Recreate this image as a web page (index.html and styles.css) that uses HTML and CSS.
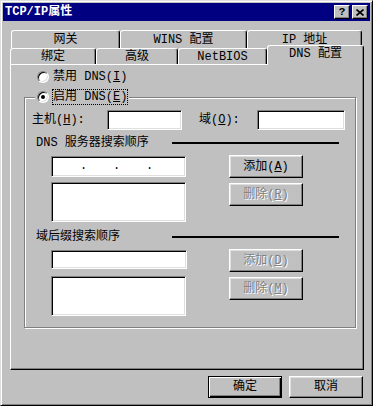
FILE: index.html
```html
<!DOCTYPE html>
<html lang="zh-CN">
<head>
    <meta charset="UTF-8">
    <title>TCP/IP属性</title>
    <link rel="stylesheet" href="styles.css">
</head>
<body>
    <div class="window">
        <div class="titlebar">
            <span class="title">TCP/IP属性</span>
            <span class="title-btn help">?</span>
            <span class="title-btn">
                <svg width="8" height="7" viewBox="0 0 8 7"><path d="M0.5 0.5L7.5 6.5M7.5 0.5L0.5 6.5" stroke="#000" stroke-width="1.6" fill="none"/></svg>
            </span>
        </div>

        <div class="tabs">
            <div class="tab-row back">
                <div class="tab" style="width:109px">网关</div>
                <div class="tab" style="width:127px">WINS 配置</div>
                <div class="tab" style="width:115px">IP 地址</div>
            </div>
            <div class="tab-row front">
                <div class="tab" style="width:86px">绑定</div>
                <div class="tab" style="width:82px">高级</div>
                <div class="tab" style="width:89px">NetBIOS</div>
                <div class="tab selected" style="width:97px">DNS 配置</div>
            </div>
        </div>

        <div class="panel">
            <div class="radio-row">
                <span class="radio"></span>
                <span>禁用 DNS(<u>I</u>)</span>
            </div>

            <div class="group">
                <div class="radio-row group-title">
                    <span class="radio checked"></span>
                    <span class="focus">启用 DNS(<u>E</u>)</span>
                </div>

                <div class="host-row">
                    <span class="host-label">主机(<u>H</u>):</span>
                    <div class="field host-input"></div>
                    <span class="domain-label">域(<u>O</u>):</span>
                    <div class="field domain-input"></div>
                </div>

                <div class="section">
                    <span class="section-label">DNS 服务器搜索顺序</span>
                    <span class="section-line"></span>
                </div>
                <div class="lists">
                    <div class="col-fields">
                        <div class="field ip-input">
                            <span class="ip-dot">.</span>
                            <span class="ip-dot">.</span>
                            <span class="ip-dot">.</span>
                        </div>
                        <div class="field list-box"></div>
                    </div>
                    <div class="col-buttons">
                        <div class="btn">添加(<u>A</u>)</div>
                        <div class="btn disabled">删除(<u>R</u>)</div>
                    </div>
                </div>

                <div class="section second">
                    <span class="section-label">域后缀搜索顺序</span>
                    <span class="section-line"></span>
                </div>
                <div class="lists">
                    <div class="col-fields wide">
                        <div class="field suffix-input"></div>
                        <div class="field list-box"></div>
                    </div>
                    <div class="col-buttons">
                        <div class="btn disabled">添加(<u>D</u>)</div>
                        <div class="btn disabled">删除(<u>M</u>)</div>
                    </div>
                </div>
            </div>
        </div>

        <div class="actions">
            <div class="btn action default">确定</div>
            <div class="btn action">取消</div>
        </div>
    </div>
</body>
</html>
```

FILE: styles.css
```css
body {
    margin: 0;
    background: #c0c0c0;
    font-family: "Liberation Mono", "Noto Sans CJK SC", monospace;
    font-size: 12px;
    line-height: 14px;
    color: #000;
}
u {
    text-decoration-thickness: 1px;
    text-underline-offset: 1px;
}
.window {
    width: 373px;
    height: 406px;
    box-sizing: border-box;
    border: 1px solid;
    border-color: #dfdfdf #000 #000 #dfdfdf;
    box-shadow: inset 1px 1px #fff, inset -1px -1px #808080;
    padding: 2px;
    background: #c0c0c0;
}
.titlebar {
    height: 18px;
    background: #000080;
    color: #fff;
    display: flex;
    align-items: center;
    padding: 0 2px;
}
.title {
    flex: 1;
    font-weight: bold;
}
.title-btn {
    width: 16px;
    height: 14px;
    box-sizing: border-box;
    margin-left: 2px;
    background: #c0c0c0;
    color: #000;
    border: 1px solid;
    border-color: #fff #000 #000 #fff;
    box-shadow: inset -1px -1px #808080;
    display: flex;
    align-items: center;
    justify-content: center;
    font-weight: bold;
    font-size: 11px;
    line-height: 11px;
}

/* tabs */
.tabs {
    margin: 9px 0 0 7px;
}
.tab-row {
    display: flex;
}
.back {
    height: 18px;
    margin-left: 1px;
}
.front {
    height: 16px;
    align-items: flex-end;
}
.tab {
    box-sizing: border-box;
    height: 100%;
    background: #c0c0c0;
    border: 1px solid;
    border-color: #fff #000 transparent #fff;
    border-bottom: none;
    border-radius: 3px 3px 0 0;
    box-shadow: inset -1px 0 #808080;
    text-align: center;
    padding-top: 2px;
}
.front .tab {
    padding-top: 1px;
}
.front .tab.selected {
    height: 20px;
    margin-bottom: -1px;
    position: relative;
    z-index: 1;
}

/* panel */
.panel {
    margin-left: 7px;
    width: 354px;
    height: 306px;
    box-sizing: border-box;
    border: 1px solid;
    border-color: #fff #000 #000 #fff;
    box-shadow: inset -1px -1px #808080;
    padding: 5px 0 0 13px;
}
.radio-row {
    display: flex;
    align-items: center;
    gap: 4px;
    height: 14px;
    padding-left: 13px;
}
.radio {
    width: 12px;
    height: 12px;
    box-sizing: border-box;
    border-radius: 50%;
    border: 1px solid;
    border-color: #808080 #fff #fff #808080;
    background: #fff;
    box-shadow: inset 1px 1px #000, inset -1px -1px #dfdfdf;
    display: flex;
    align-items: center;
    justify-content: center;
}
.radio.checked::after {
    content: "";
    width: 4px;
    height: 4px;
    border-radius: 50%;
    background: #000;
}
.focus {
    outline: 1px dotted #000;
    outline-offset: 0;
}

.group {
    margin-top: 13px;
    width: 332px;
    height: 231px;
    box-sizing: border-box;
    border: 1px solid #808080;
    box-shadow: inset 1px 1px #fff, 1px 1px #fff;
}
.group-title {
    width: fit-content;
    margin: -8px 0 0 10px;
    padding: 0 2px;
    background: #c0c0c0;
}

.host-row {
    display: flex;
    align-items: center;
    margin-top: 6px;
    padding-left: 7px;
}
.host-label {
    width: 75px;
}
.domain-label {
    width: 58px;
    margin-left: 17px;
}
.field {
    box-sizing: border-box;
    background: #fff;
    border: 1px solid;
    border-color: #808080 #fff #fff #808080;
    box-shadow: inset 1px 1px #000, inset -1px -1px #dfdfdf;
}
.host-input {
    width: 75px;
    height: 20px;
}
.domain-input {
    width: 88px;
    height: 20px;
}

.section {
    display: flex;
    align-items: center;
    margin-top: 6px;
    padding-left: 11px;
}
.section.second {
    margin-top: 8px;
}
.section-label {
    width: 136px;
}
.section-line {
    width: 167px;
    height: 2px;
    background: #000;
}

.lists {
    display: grid;
    grid-template-columns: 135px 74px;
    column-gap: 43px;
    margin-top: 6px;
    padding-left: 26px;
}
.col-fields {
    display: flex;
    flex-direction: column;
    gap: 5px;
}
.col-fields.wide {
    gap: 7px;
}
.col-buttons {
    display: flex;
    flex-direction: column;
    gap: 5px;
    margin-top: -1px;
}
.ip-input {
    height: 21px;
    display: flex;
    padding: 2px 0 0 28px;
}
.ip-dot {
    width: 7px;
    margin-right: 26px;
    text-align: center;
}
.suffix-input {
    width: 136px;
    height: 19px;
}
.list-box {
    height: 40px;
}

.btn {
    box-sizing: border-box;
    height: 23px;
    background: #c0c0c0;
    border: 1px solid;
    border-color: #fff #000 #000 #fff;
    box-shadow: inset -1px -1px #808080, inset 1px 1px #dfdfdf;
    display: flex;
    align-items: center;
    justify-content: center;
}
.btn.disabled {
    color: #808080;
    text-shadow: 1px 1px #fff;
}

.actions {
    display: flex;
    justify-content: flex-end;
    gap: 7px;
    margin-top: 6px;
    padding-right: 7px;
}
.btn.action {
    width: 74px;
    height: 22px;
}
.btn.default {
    border-color: #000;
    box-shadow: inset 1px 1px #fff, inset -1px -1px #000, inset -2px -2px #808080;
}
```
